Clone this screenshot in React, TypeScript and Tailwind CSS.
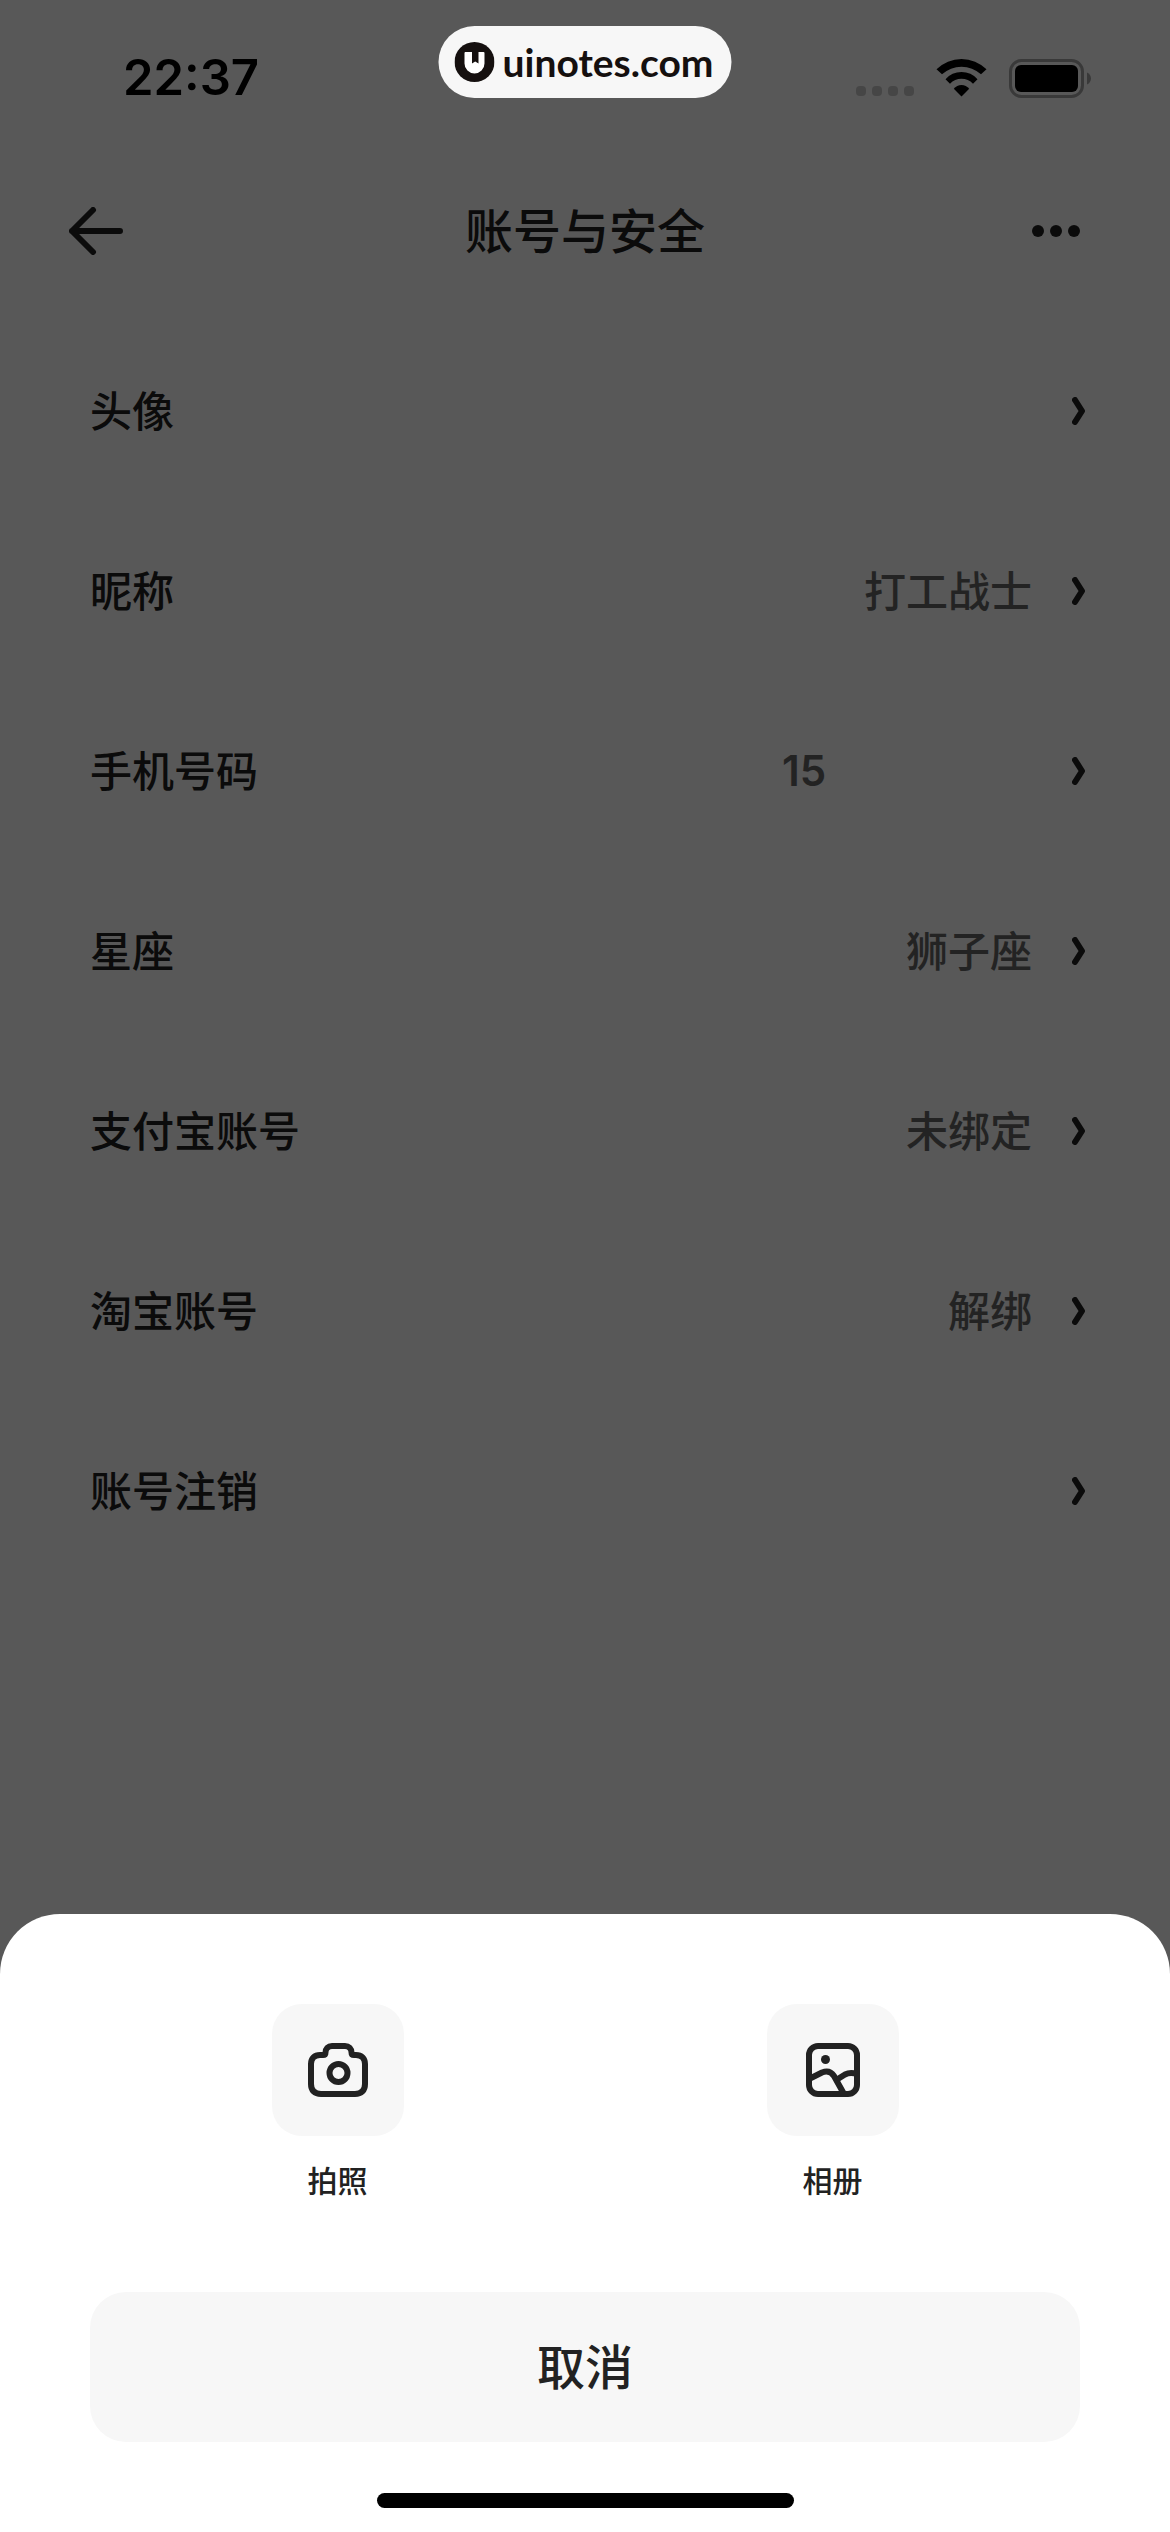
import { useState } from "react";

type SettingRow = {
  label: string;
  value?: string;
  masked?: boolean;
};

const rows: SettingRow[] = [
  { label: "头像" },
  { label: "昵称", value: "打工战士" },
  { label: "手机号码", value: "15", masked: true },
  { label: "星座", value: "狮子座" },
  { label: "支付宝账号", value: "未绑定" },
  { label: "淘宝账号", value: "解绑" },
  { label: "账号注销" },
];

function WifiIcon() {
  return (
    <svg viewBox="0 0 51 38" className="h-[38px] w-[51px]" fill="#000" aria-hidden="true">
      <path d="M.5 10.3A35.5 35.5 0 0 1 50.5 10.3L45 15.3A28.8 28.8 0 0 0 6 15.3Z" />
      <path d="M9.5 20.3A21 21 0 0 1 41.5 20.3L37 24.7A15.7 15.7 0 0 0 14 24.7Z" />
      <path d="M17.8 29.7A10 10 0 0 1 33.2 29.7L25.5 37.5Z" />
    </svg>
  );
}

function BatteryIcon() {
  return (
    <svg viewBox="0 0 82 39" className="h-[39px] w-[82px]" aria-hidden="true">
      <rect x="1.5" y="1.5" width="72" height="36" rx="11" fill="none" stroke="#a3a3a3" strokeWidth="3" />
      <rect x="6" y="6" width="63" height="27" rx="6" fill="#000" />
      <path d="M78 13.5C80.500 14.500 82 17 82 19.500S80.500 24.500 78 25.500Z" fill="#a3a3a3" />
    </svg>
  );
}

function StatusBar() {
  return (
    <div className="flex h-[156px] items-center justify-between pr-[79px] pl-[123px]">
      <span className="font-['Inter',sans-serif] text-[49px] leading-[60px] font-semibold text-black">
        22:37
      </span>
      <div className="flex items-center gap-[22px]">
        <div className="flex gap-[6px] self-end pb-[2px]">
          {[0, 1, 2, 3].map((dot) => (
            <span key={dot} className="size-[10px] rounded-[4px] bg-[#c8c8c8]" />
          ))}
        </div>
        <WifiIcon />
        <BatteryIcon />
      </div>
    </div>
  );
}

function SiteBadge() {
  return (
    <div className="absolute top-[26px] left-1/2 flex h-[72px] -translate-x-1/2 items-center gap-2 rounded-full bg-[#f7f7f7] pr-[18px] pl-4">
      <svg viewBox="0 0 40 40" className="size-10" aria-hidden="true">
        <circle cx="20" cy="20" r="20" fill="#15100f" />
        <path
          d="M11 10H17.500V21.500L20.700 19.500L24 21.500V10H29Q30 10 30 11V21.500A10 10 0 0 1 10 21.500V11Q10 10 11 10Z"
          fill="#fff"
        />
      </svg>
      <span className="font-['Lato',sans-serif] text-[39px] leading-[48px] font-bold text-[#15100f]">
        uinotes.com
      </span>
    </div>
  );
}

function PageHeader() {
  return (
    <header className="flex h-[150px] items-center justify-between px-[69px] text-[#222]">
      <button type="button" aria-label="返回" className="w-[90px]">
        <svg
          viewBox="0 0 54 48"
          className="h-12 w-[54px]"
          fill="none"
          stroke="currentColor"
          strokeWidth="6"
          strokeLinecap="round"
          strokeLinejoin="round"
          aria-hidden="true"
        >
          <path d="M24 3L3 24L24 45M3 24H51" />
        </svg>
      </button>
      <h1 className="text-[48px] leading-[60px] font-medium">账号与安全</h1>
      <button type="button" aria-label="更多" className="flex w-[90px] justify-center">
        <svg viewBox="0 0 48 12" className="h-3 w-12" fill="currentColor" aria-hidden="true">
          <circle cx="6" cy="6" r="6" />
          <circle cx="24" cy="6" r="6" />
          <circle cx="42" cy="6" r="6" />
        </svg>
      </button>
    </header>
  );
}

function SettingItem({ label, value, masked }: SettingRow) {
  return (
    <li>
      <button
        type="button"
        className="flex h-[180px] w-full items-center gap-10 pr-[84px] pl-[90px] text-[42px] leading-[60px] font-medium"
      >
        <span className="text-[#222]">{label}</span>
        <span
          className={
            masked
              ? "ml-auto w-[250px] text-left font-['Inter',sans-serif] font-semibold text-[#666]"
              : "ml-auto text-[#666]"
          }
        >
          {value}
        </span>
        <svg
          viewBox="0 0 14 28"
          className="h-7 w-[14px]"
          fill="none"
          stroke="#222"
          strokeWidth="6"
          strokeLinecap="round"
          strokeLinejoin="round"
          aria-hidden="true"
        >
          <path d="M3 3L10 14L3 25" />
        </svg>
      </button>
    </li>
  );
}

function CameraIcon() {
  return (
    <svg
      viewBox="0 0 72 72"
      className="size-[72px]"
      fill="none"
      stroke="#222"
      strokeWidth="6"
      strokeLinejoin="round"
      aria-hidden="true"
    >
      <path d="M18 21H21C22.500 21 23.500 20.500 23.500 18.500C23.500 14.500 26 12 30 12H43C47 12 49.500 14.500 49.500 18.500C49.500 20.500 50.500 21 52 21H54C59.500 21 63 24.500 63 30V50C63 56.500 59.500 60 53 60H19C12.500 60 9 56.500 9 50V30C9 24.500 12.500 21 18 21Z" />
      <circle cx="36.5" cy="39" r="9" />
    </svg>
  );
}

function AlbumIcon() {
  return (
    <svg
      viewBox="0 0 72 72"
      className="size-[72px]"
      fill="none"
      stroke="#222"
      strokeWidth="6"
      strokeLinejoin="round"
      aria-hidden="true"
    >
      <rect x="12" y="12" width="48" height="48" rx="9" />
      <circle cx="28.5" cy="25.5" r="4.5" fill="#222" stroke="none" />
      <path d="M12 45L25 38.500C30 36.500 34 37.500 37 42L47 60" />
      <path d="M40 45.500L48 40.500C52 38.500 55 38.500 60 40" />
    </svg>
  );
}

function ActionSheet({ onCancel }: { onCancel: () => void }) {
  return (
    <div className="absolute inset-0 flex flex-col justify-end bg-black/65">
      <div
        role="dialog"
        aria-label="更换头像"
        className="rounded-t-[60px] bg-white px-[90px] pt-[90px] pb-6 text-[#222]"
      >
        <div className="grid grid-cols-2 justify-items-center">
          <button type="button" className="flex flex-col items-center gap-6">
            <span className="flex size-[132px] items-center justify-center rounded-[30px] bg-[#f7f7f7]">
              <CameraIcon />
            </span>
            <span className="text-[30px] leading-[42px] font-medium">拍照</span>
          </button>
          <button type="button" className="flex flex-col items-center gap-6">
            <span className="flex size-[132px] items-center justify-center rounded-[30px] bg-[#f7f7f7]">
              <AlbumIcon />
            </span>
            <span className="text-[30px] leading-[42px] font-medium">相册</span>
          </button>
        </div>
        <button
          type="button"
          onClick={onCancel}
          className="mt-[90px] h-[150px] w-full rounded-[36px] bg-[#f7f7f7] text-[48px] leading-[60px] font-medium"
        >
          取消
        </button>
        <div className="mx-auto mt-[51px] h-[15px] w-[417px] rounded-full bg-black" />
      </div>
    </div>
  );
}

export default function App() {
  const [sheetOpen, setSheetOpen] = useState(true);

  return (
    <div className="relative min-h-screen bg-[#fbfbfb] font-['Noto_Sans','Noto_Sans_CJK_SC',sans-serif]">
      <StatusBar />
      <PageHeader />
      <main className="pt-[15px]">
        <ul>
          {rows.map((row) => (
            <SettingItem key={row.label} {...row} />
          ))}
        </ul>
      </main>
      {sheetOpen ? <ActionSheet onCancel={() => setSheetOpen(false)} /> : null}
      <SiteBadge />
    </div>
  );
}
